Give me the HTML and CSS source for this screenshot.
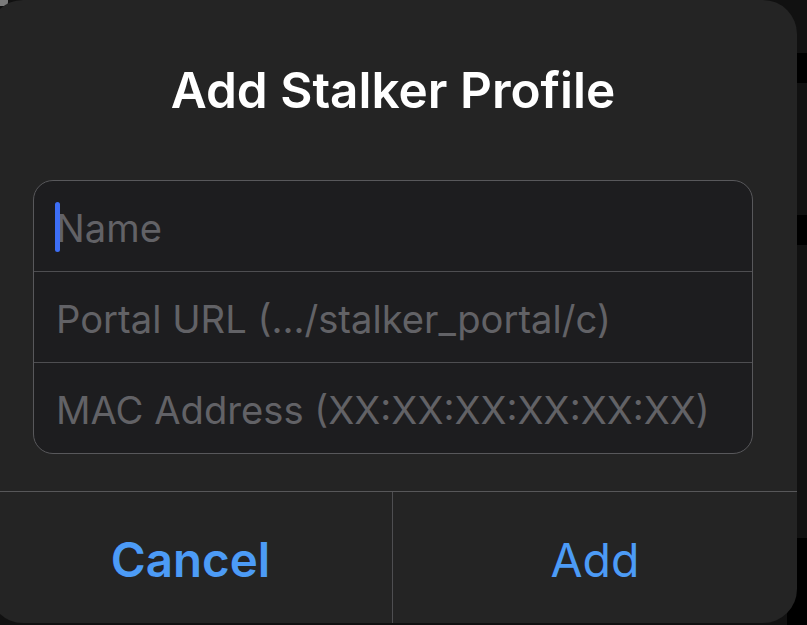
FILE: index.html
```html
<!DOCTYPE html>
<html lang="en">
<head>
<meta charset="utf-8">
<title>Add Stalker Profile</title>
<link rel="stylesheet" href="styles.css">
</head>
<body>
<div class="backdrop">
  <span class="shade shade-a"></span>
  <span class="shade shade-b"></span>
  <span class="shade shade-c"></span>
  <span class="glint"></span>
</div>
<div class="alert" role="dialog" aria-labelledby="alert-title">
  <h1 class="alert-title" id="alert-title">Add Stalker Profile</h1>
  <div class="fields">
    <div class="field"><span class="caret"></span><span class="placeholder">Name</span></div>
    <div class="field"><span class="placeholder">Portal URL (.../stalker_portal/c)</span></div>
    <div class="field"><span class="placeholder">MAC Address (XX:XX:XX:XX:XX:XX)</span></div>
  </div>
  <div class="actions">
    <button class="action action-cancel" type="button">Cancel</button>
    <button class="action action-add" type="button">Add</button>
  </div>
</div>
</body>
</html>
```

FILE: styles.css
```css
html, body {
  margin: 0;
  padding: 0;
}

body {
  width: 807px;
  height: 625px;
  overflow: hidden;
  background: #111111;
  position: relative;
  font-family: Inter, "Noto Sans", "Liberation Sans", sans-serif;
}

.backdrop {
  position: absolute;
  inset: 0;
}

.shade {
  position: absolute;
  right: 0;
  width: 20px;
  background: #000000;
}

.shade-a { top: 53px; height: 30px; }
.shade-b { top: 215px; height: 30px; }
.shade-c { top: 538px; bottom: 0; }

.glint {
  position: absolute;
  left: 0;
  top: 0;
  width: 8px;
  height: 6px;
  background: #7a7a7a;
  border-radius: 0 0 4px 0;
}

.alert {
  position: absolute;
  left: -11px;
  top: 0;
  width: 808px;
  height: 623px;
  background: #242424;
  border-radius: 34px;
  display: flex;
  flex-direction: column;
  overflow: hidden;
}

.alert-title {
  margin: 0;
  height: 180px;
  display: flex;
  align-items: center;
  justify-content: center;
  color: #ffffff;
  font-size: 49.5px;
  font-weight: 600;
  letter-spacing: 0;
}

.fields {
  margin: 0 44px;
  height: 274px;
  box-sizing: border-box;
  border: 1px solid #58585b;
  border-radius: 20px;
  background: #1d1d1f;
  display: flex;
  flex-direction: column;
}

.field {
  flex: 1;
  display: flex;
  align-items: center;
  padding-left: 22px;
  padding-top: 3px;
  position: relative;
}

.field + .field {
  border-top: 1px solid #4e4e51;
}

.placeholder {
  color: #626266;
  font-size: 38.2px;
  font-weight: 400;
}

.caret {
  position: absolute;
  left: 21px;
  top: 21px;
  width: 5px;
  height: 50px;
  border-radius: 3px;
  background: #3d6ef5;
}

.actions {
  margin-top: auto;
  height: 131px;
  border-top: 1px solid #575759;
  display: grid;
  grid-template-columns: 1fr 1fr;
}

.action {
  border: 0;
  margin: 0;
  padding: 4px 0 0;
  background: transparent;
  color: #4c9bf6;
  font-family: inherit;
  display: flex;
  align-items: center;
  justify-content: center;
}

.action-cancel {
  font-size: 47.5px;
  font-weight: 600;
  border-right: 1px solid #4e4e51;
}

.action-add {
  font-size: 46.5px;
  font-weight: 400;
}
```
